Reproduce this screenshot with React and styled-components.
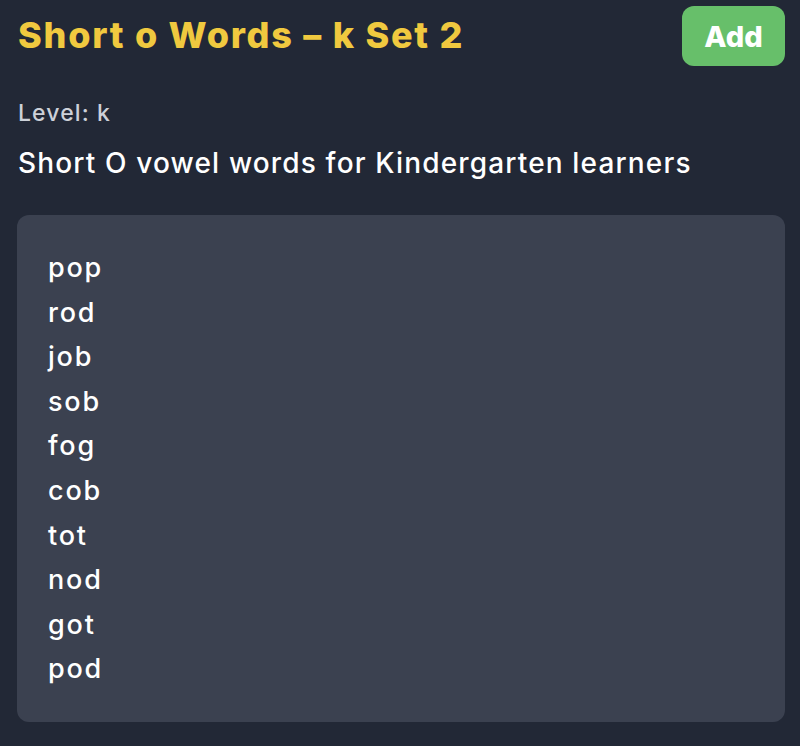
import React from 'react';
import styled, { createGlobalStyle } from 'styled-components';

const GlobalStyle = createGlobalStyle`
  html, body {
    margin: 0;
    padding: 0;
    background: #222836;
  }
  body {
    font-family: Inter, "Noto Sans", sans-serif;
  }
`;

const Page = styled.div`
  width: 800px;
  height: 746px;
  box-sizing: border-box;
  padding: 6px 15px 24px 18px;
  display: flex;
  flex-direction: column;
  overflow: hidden;
`;

const Header = styled.div`
  display: flex;
  justify-content: space-between;
  align-items: flex-start;
`;

const Title = styled.h1`
  margin: 0;
  padding-top: 7px;
  color: #f0c93f;
  font-size: 36px;
  font-weight: 800;
  line-height: 44px;
  letter-spacing: 1.75px;
`;

const AddButton = styled.button`
  width: 103px;
  height: 60px;
  padding: 0;
  border: none;
  border-radius: 12px;
  background: #67bf6a;
  color: #fff;
  font-family: inherit;
  font-size: 29px;
  font-weight: 800;
  cursor: pointer;
`;

const Level = styled.p`
  margin: 33px 0 0;
  color: #cdd1d9;
  font-size: 23px;
  font-weight: 500;
  line-height: 28px;
  letter-spacing: 1.1px;
`;

const Description = styled.p`
  margin: 18px 0 0;
  color: #fff;
  font-size: 28px;
  font-weight: 500;
  line-height: 36px;
  letter-spacing: 1.15px;
`;

const WordCard = styled.ul`
  list-style: none;
  margin: 34px 0 0 -1px;
  padding: 31px 31px;
  height: 507px;
  box-sizing: border-box;
  background: #3b4150;
  border-radius: 12px;
`;

const Word = styled.li`
  color: #fff;
  font-size: 27px;
  font-weight: 500;
  line-height: 44.6px;
  letter-spacing: 1.8px;
`;

const words = ['pop', 'rod', 'job', 'sob', 'fog', 'cob', 'tot', 'nod', 'got', 'pod'];

export default function App() {
  return (
    <>
      <GlobalStyle />
      <Page>
        <Header>
          <Title>Short o Words – k Set 2</Title>
          <AddButton>Add</AddButton>
        </Header>
        <Level>Level: k</Level>
        <Description>Short O vowel words for Kindergarten learners</Description>
        <WordCard>
          {words.map((w, i) => (
            <Word key={i}>{w}</Word>
          ))}
        </WordCard>
      </Page>
    </>
  );
}
